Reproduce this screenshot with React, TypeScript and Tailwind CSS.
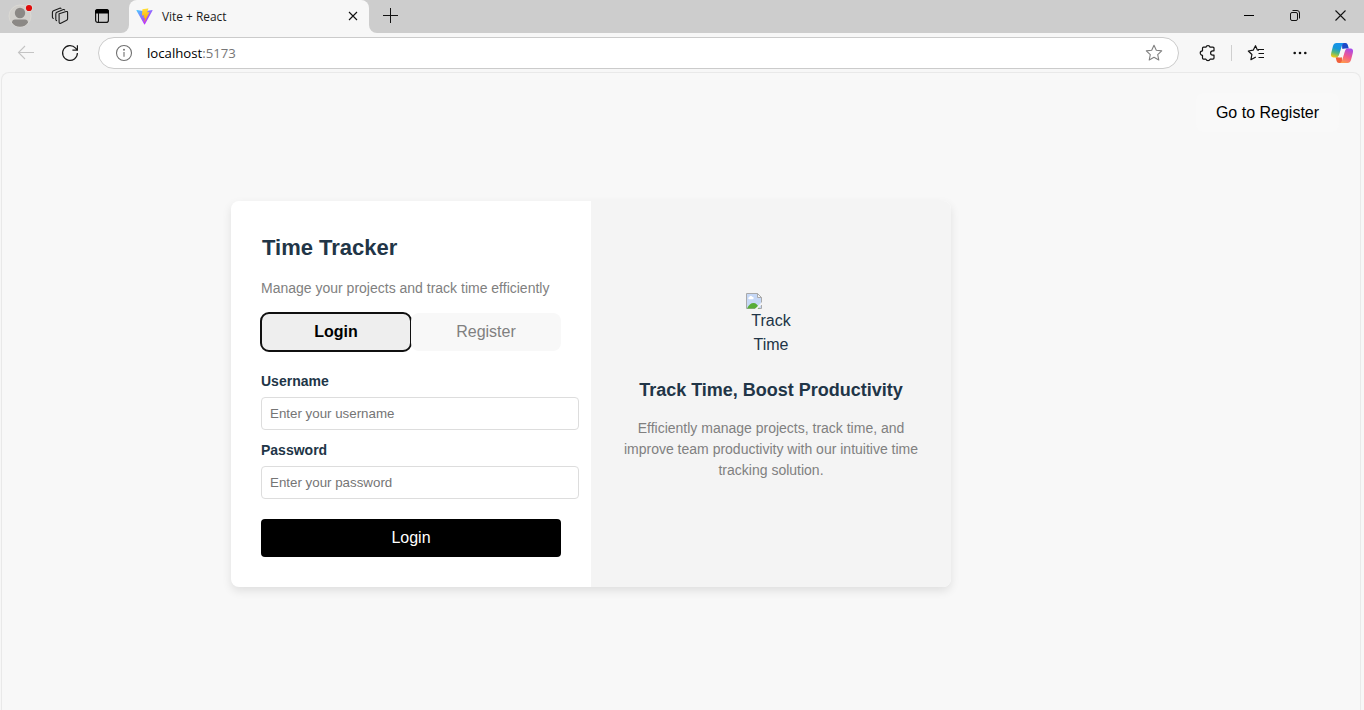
import React from "react";

function TitleBar() {
  return (
    <div className="flex h-[33px] shrink-0 bg-[#f7f7f7]">
      <div className="flex w-[129px] items-center rounded-br-lg bg-[#cdcdcd] pb-px">
        <svg className="ml-[8px]" width="26" height="26" viewBox="0 0 26 26">
          <circle cx="12" cy="13" r="11" fill="#d1cfcb" stroke="#dcdad6" strokeWidth="0.8" />
          <circle cx="12" cy="10" r="5.2" fill="#8b8885" />
          <path d="M4 19.500C4 17.400 5.300 16.400 7 16.400h10c1.700 0 3 1 3 3.100-1.500 2.700-4.500 4.300-8 4.300s-6.500-1.600-8-4.300z" fill="#8b8885" />
          <circle cx="21" cy="5" r="3.900" fill="#dcdad6" />
          <circle cx="21" cy="5" r="3.100" fill="#e00b0b" />
        </svg>
        <svg className="ml-[17px]" width="18" height="18" viewBox="0 0 18 18" fill="none" stroke="#1b1b1b" strokeWidth="1.1" strokeLinejoin="round" strokeLinecap="round">
          <path d="M8.200 6.800 15.200 4.500c.8-.2 1.400.1 1.400.9v6.300c0 .6-.3 1.200-.9 1.500l-5.900 3c-.9.400-1.700 0-1.700-.9V8.500c0-.8-.3-1.400.1-1.700z" />
          <path d="M5.600 13.600c-.5-.1-.8-.5-.8-1.100V6.900c0-.8.400-1.400 1.100-1.700l6.500-2.600c.6-.2 1.100 0 1.300.4" />
          <path d="M2.300 11.400c-.5-.1-.9-.5-.9-1.100V5.500c0-.8.400-1.400 1.100-1.700L8.700 1.200c.6-.2 1.100 0 1.300.4" />
        </svg>
        <svg className="ml-[25px]" width="16" height="16" viewBox="0 0 16 16">
          <rect x="1.600" y="1.600" width="12.800" height="12.800" rx="2.200" fill="none" stroke="#111" strokeWidth="1.200" />
          <path d="M1 5.500V3.500C1 2 2 1 3.500 1h9C14 1 15 2 15 3.500v2z" fill="#000" />
          <path d="M4.500 5v9" stroke="#111" strokeWidth="1" />
        </svg>
      </div>
      <div className="w-[240px] bg-[#cdcdcd]">
        <div className="flex h-full items-center rounded-t-lg bg-[#f7f7f7] pb-px pl-[7px] pr-[11px]">
          <svg width="17" height="17" viewBox="0 0 410 404" fill="none">
            <defs>
              <linearGradient id="viteA" x1="6" y1="33" x2="235" y2="344" gradientUnits="userSpaceOnUse">
                <stop stopColor="#41D1FF" />
                <stop offset="1" stopColor="#BD34FE" />
              </linearGradient>
              <linearGradient id="viteB" x1="194.650" y1="8.800" x2="236" y2="293" gradientUnits="userSpaceOnUse">
                <stop stopColor="#FFEA83" />
                <stop offset="0.083" stopColor="#FFDD35" />
                <stop offset="1" stopColor="#FFA800" />
              </linearGradient>
            </defs>
            <path d="M399.600 59.500 215.600 388.500c-3.800 6.800-13.600 6.800-17.400.1L10.600 59.600c-4.200-7.400 2.100-16.300 10.500-14.800l184.200 32.900c1.200.2 2.400.2 3.500 0l180.300-32.900c8.400-1.500 14.800 7.400 10.500 14.700z" fill="url(#viteA)" />
            <path d="M293 1.600 156.800 28.300c-2.200.4-3.900 2.300-4 4.600l-8.400 141.500c-.2 3.300 2.900 5.900 6.100 5.200l37.900-8.800c3.500-.8 6.700 2.300 6 5.900l-11.300 55.100c-.8 3.700 2.800 6.900 6.400 5.800l23.400-7.100c3.600-1.100 7.200 2.100 6.400 5.800l-17.900 86.600c-1.100 5.400 6.100 8.400 9.100 3.700l2-3.100 110.900-221.300c1.900-3.700-1.300-7.900-5.400-7.100l-39 7.500c-3.700.7-6.800-2.700-5.800-6.300l25.500-88.200c1-3.600-2.100-7.100-5.700-6.500z" fill="url(#viteB)" />
          </svg>
          <span className="ml-[9px] flex-1 pb-px font-['Open_Sans','Noto_Sans',sans-serif] text-[11.900px] leading-4 text-[#1b1b1b]">Vite + React</span>
          <svg width="10" height="10" viewBox="0 0 10 10" stroke="#111" strokeWidth="1.100">
            <path d="M1 1l8 8M9 1 1 9" />
          </svg>
        </div>
      </div>
      <div className="flex flex-1 items-center justify-between rounded-bl-lg bg-[#cdcdcd] pb-[2px] pl-[14px] pr-[18px]">
        <svg width="15" height="15" viewBox="0 0 15 15" stroke="#111" strokeWidth="1">
          <path d="M0 7.500h15M7.500 0v15" />
        </svg>
        <div className="flex items-center gap-[35px]">
          <svg width="11" height="11" viewBox="0 0 11 11" stroke="#000" strokeWidth="1">
            <path d="M1 5.500h10" />
          </svg>
          <svg width="11" height="11" viewBox="0 0 11 11" fill="none" stroke="#111" strokeWidth="1">
            <rect x="1.500" y="2.500" width="7" height="8" rx="1.500" />
            <path d="M3.500.500H8a2.500 2.500 0 0 1 2.500 2.500v5.500" />
          </svg>
          <svg width="11" height="11" viewBox="0 0 11 11" stroke="#111" strokeWidth="1.100">
            <path d="M.500.500l10 10M10.500.500l-10 10" />
          </svg>
        </div>
      </div>
    </div>
  );
}

function Toolbar() {
  return (
    <div className="flex h-[39px] shrink-0 items-center bg-[#f7f7f7] pb-px pt-[2px]">
      <svg className="ml-[17px]" width="18" height="16" viewBox="0 0 18 16" fill="none" stroke="#c4c4c4" strokeWidth="1.100">
        <path d="M17 7.500H1.500M8 1 1.500 7.500 8 14" />
      </svg>
      <svg className="ml-[26px]" width="18" height="18" viewBox="0 0 18 18" fill="none" stroke="#1b1b1b" strokeWidth="1.200">
        <path d="M16.400 9A7.400 7.400 0 1 1 14.600 4.200l1.500 1.600M16.400 1.200v5h-5" />
      </svg>
      <div className="ml-[19px] flex h-8 w-[1081px] shrink-0 items-center rounded-full border border-[#cbcbcb] bg-white pl-[16px] pr-[15px]">
        <svg width="18" height="18" viewBox="0 0 18 18" fill="none" stroke="#707070" strokeWidth="1.100">
          <circle cx="9" cy="9" r="7.500" />
          <path d="M9 8v4.800" />
          <circle cx="9" cy="5.700" r="0.400" fill="#707070" />
        </svg>
        <span className="ml-[14px] flex-1 font-['Open_Sans','Noto_Sans',sans-serif] text-[13.200px] leading-5 text-[#767676]">
          <span className="text-black">localhost</span>:5173
        </span>
        <svg width="18" height="18" viewBox="0 0 18 18" fill="none" stroke="#808080" strokeWidth="1.100" strokeLinejoin="round">
          <path d="M9 1.300l2.300 5 5.400.6-4 3.700 1.100 5.400L9 13.300 4.200 16l1.100-5.400-4-3.700 5.400-.6z" />
        </svg>
      </div>
      <svg className="ml-[20px] shrink-0" width="18" height="18" viewBox="0 0 18 18" fill="none" stroke="#111" strokeWidth="1.200" strokeLinejoin="round">
        <path d="M6.900 3.200a2.200 2.200 0 0 1 4.200 0h2.900a1 1 0 0 1 1 1v2.600h-1.200a2.200 2.200 0 0 0 0 4.400h1.200v2.900a1 1 0 0 1-1 1h-2.900a2.200 2.200 0 0 1-4.200 0H4.500a1 1 0 0 1-1-1v-2.800a2.200 2.200 0 0 1 0-4.500v-2.600a1 1 0 0 1 1-1z" />
      </svg>
      <div className="ml-[14px] h-4 w-px shrink-0 bg-[#cfcfcf]" />
      <svg className="ml-[15px] shrink-0" width="18" height="18" viewBox="0 0 18 18" fill="none" stroke="#111" strokeWidth="1.200" strokeLinejoin="round">
        <path d="M11.800 6.300 10.400 6 8.500 1.700 6.200 6.200 1.300 7l3.600 3.500-1 5.200L8.800 13" />
        <path d="M11 5.500H17M11.500 9.500H17M11.500 13.500H17" />
      </svg>
      <svg className="ml-[28px] shrink-0" width="14" height="4" viewBox="0 0 14 4" fill="#111">
        <circle cx="1.700" cy="2" r="1.300" />
        <circle cx="7" cy="2" r="1.300" />
        <circle cx="12.300" cy="2" r="1.300" />
      </svg>
      <svg className="ml-[23px] shrink-0" width="24" height="22" viewBox="0 0 24 22">
        <defs>
          <linearGradient id="copA" x1="0.600" y1="0" x2="0.300" y2="1">
            <stop stopColor="#1792ee" />
            <stop offset="0.400" stopColor="#1698d8" />
            <stop offset="0.700" stopColor="#55b87c" />
            <stop offset="1" stopColor="#f3cb16" />
          </linearGradient>
          <linearGradient id="copB" x1="0.700" y1="0" x2="0.300" y2="1">
            <stop stopColor="#a94bea" />
            <stop offset="0.500" stopColor="#f0588f" />
            <stop offset="1" stopColor="#ff9a4c" />
          </linearGradient>
        </defs>
        <path d="M12 1h3.500c1.300 0 1.900.8 2.300 2l1 3.600h-3c-2 0-2.900 1-3.500 3z" fill="#1c49c8" />
        <path d="M12 21H9c-1.300 0-2-.8-2.400-2l-1-3.800h2.800c2 0 2.900-1 3.500-3z" fill="#f0603c" />
        <path d="M6.500 1h8c-1.500 0-2.200 1.400-2.700 3L9.200 12.500c-.6 1.800-1.400 2.900-3.200 2.900H3.500C1.200 15.400.5 13.600 1.200 11L3 4c.6-2 1.700-3 3.500-3z" fill="url(#copA)" />
        <path d="M17.500 21h-8c1.500 0 2.200-1.400 2.700-3l2.600-8.500c.6-1.800 1.400-2.900 3.200-2.900h2.500c2.300 0 3 1.800 2.300 4.400L21 18c-.6 2-1.700 3-3.500 3z" fill="url(#copB)" />
        <path d="M15.800 6.700C14.500 7.300 14.300 8.500 13.900 9.800L12.500 14.200C12.200 15 11.700 15.400 11 15.400H8.200C9.200 14.800 9.500 13.700 9.800 12.600L11.200 8.200C11.500 7.200 12 6.700 13 6.700z" fill="#f7f7f7" />
      </svg>
    </div>
  );
}

function BrokenImage() {
  return (
    <svg width="16" height="16" viewBox="0 0 16 16">
      <path d="M.500.500h11l4 4v11H.500z" fill="#c6d8f6" stroke="#a9a9a9" />
      <path d="M3 6.200c-1-.1-1.200-1.700.2-1.900.3-1.600 2.700-1.700 3.200-.2 1.500-.2 1.900 2 .4 2.100z" fill="#fff" />
      <path d="M1 15.500c1.500-3.500 4-5.500 6.500-5.500 2.400 0 4.500 2 6 5.500z" fill="#58ad38" />
      <path d="M8.800 16 16 9v2.200L11.500 16z" fill="#f4f4f4" />
      <path d="M11.500.500v4h4z" fill="#f5f5f5" stroke="#a9a9a9" />
      <path d="M12 0h4v4z" fill="#f4f4f4" />
    </svg>
  );
}

function Field({ label, placeholder, type }: { label: string; placeholder: string; type: string }) {
  return (
    <label className="block">
      <span className="block text-sm leading-[21px] font-bold">{label}</span>
      <input
        type={type}
        placeholder={placeholder}
        className="mt-[5px] block h-[33px] w-[318px] rounded border border-[#dddddd] bg-white px-2 text-[13.333px] text-black outline-none placeholder:text-[#757575]"
      />
    </label>
  );
}

export default function App() {
  return (
    <div className="flex h-[710px] w-[1364px] flex-col overflow-hidden bg-[#f7f7f7] font-['Liberation_Sans',Arial,sans-serif] text-[#213547]">
      <TitleBar />
      <Toolbar />
      <main className="ml-px mr-[3px] flex-1 rounded-t-lg border border-b-0 border-[#e9e9e9] bg-[#f8f8f8]">
        <div className="flex justify-end pr-[21px] pt-[20px]">
          <button className="h-[39px] w-[143px] rounded-lg bg-[#f9f9f9] text-base text-black">Go to Register</button>
        </div>
        <div className="ml-[229px] mt-[69px] flex h-[386px] w-[720px] overflow-hidden rounded-lg bg-white shadow-[0_4px_10px_rgba(0,0,0,0.1)]">
          <section className="w-[360px] px-[30px] pt-[30px]">
            <h1 className="pl-px text-[22px] leading-[33px] font-bold">Time Tracker</h1>
            <p className="mt-[14px] text-sm leading-[21px] text-[#808080]">Manage your projects and track time efficiently</p>
            <div className="mt-[14px] flex h-[38px]">
              <button className="w-[150px] rounded-lg bg-[#eeeeee] text-base font-bold text-black outline-2 outline-[#101010] -outline-offset-1">Login</button>
              <button className="w-[150px] rounded-lg bg-[#f8f8f8] text-base text-[#808080]">Register</button>
            </div>
            <form className="mt-[20px] flex flex-col gap-[10px]">
              <Field label="Username" placeholder="Enter your username" type="text" />
              <Field label="Password" placeholder="Enter your password" type="password" />
              <button type="button" className="mt-[10px] h-[38px] w-[300px] rounded bg-black text-base text-white">Login</button>
            </form>
          </section>
          <section className="flex w-[360px] flex-col items-center bg-[#f4f4f4] px-[30px] pt-[92px] text-center">
            <div className="w-[50px]">
              <BrokenImage />
              <div className="text-base leading-6">Track Time</div>
            </div>
            <h2 className="mt-[20px] text-lg leading-[27px] font-bold">Track Time, Boost Productivity</h2>
            <p className="mt-[14px] text-sm leading-[21px] text-[#808080]">
              Efficiently manage projects, track time, and improve team productivity with our intuitive time tracking solution.
            </p>
          </section>
        </div>
      </main>
    </div>
  );
}
